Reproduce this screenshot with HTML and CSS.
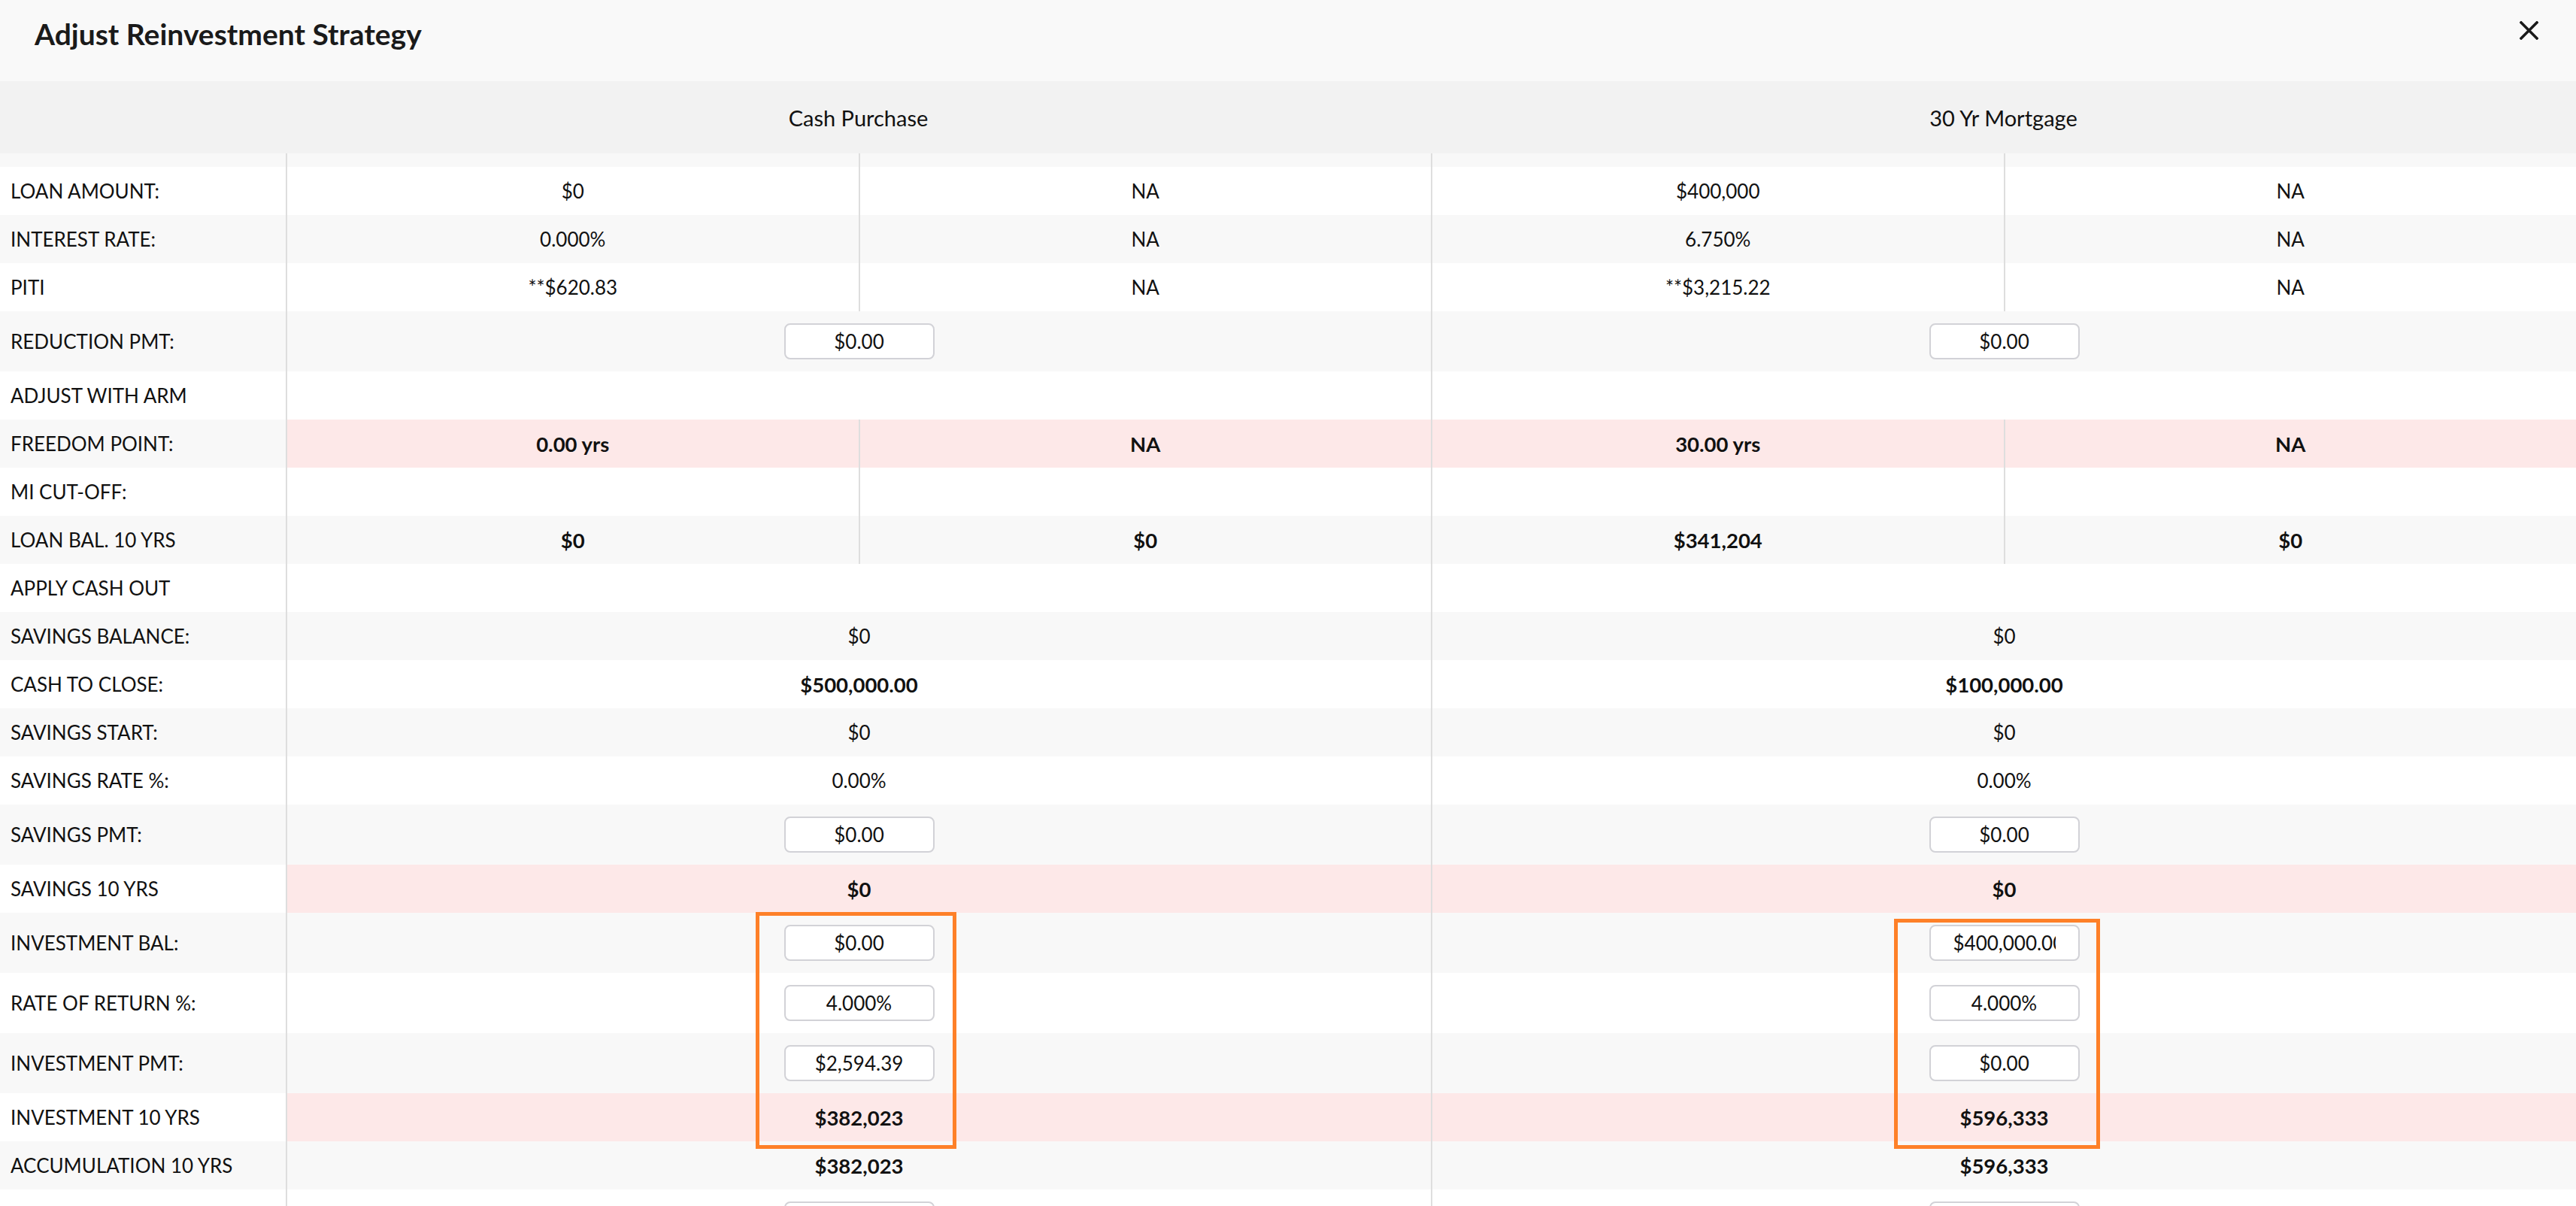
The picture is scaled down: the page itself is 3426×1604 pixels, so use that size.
FILE: index.html
```html
<!DOCTYPE html>
<html lang="en">
<head>
    <meta charset="UTF-8">
    <meta name="viewport" content="width=device-width, initial-scale=1.0">
    <title>Adjust Reinvestment Strategy</title>
    <link rel="stylesheet" href="styles.css">
</head>
<body>
    <div class="modal">
        <header class="modal-header">
            <h2>Adjust Reinvestment Strategy</h2>
            <button class="close-btn" aria-label="Close">
                <svg viewBox="0 0 25 25" width="25" height="25">
                    <path d="M2 2 L23 23 M23 2 L2 23" stroke="#1a1a1a" stroke-width="3.6" stroke-linecap="square" fill="none"/>
                </svg>
            </button>
        </header>

        <div class="col-head">
            <div></div>
            <div>Cash Purchase</div>
            <div>30 Yr Mortgage</div>
        </div>

        <div class="grid">
            <!-- row scrolled under the sticky header -->
            <div class="row stub">
                <div class="label"></div>
                <div class="cell"></div><div class="cell"></div><div class="cell"></div><div class="cell"></div>
            </div>

            <div class="row">
                <div class="label">LOAN AMOUNT:</div>
                <div class="cell">$0</div><div class="cell">NA</div>
                <div class="cell">$400,000</div><div class="cell">NA</div>
            </div>
            <div class="row">
                <div class="label">INTEREST RATE:</div>
                <div class="cell">0.000%</div><div class="cell">NA</div>
                <div class="cell">6.750%</div><div class="cell">NA</div>
            </div>
            <div class="row">
                <div class="label">PITI</div>
                <div class="cell">**$620.83</div><div class="cell">NA</div>
                <div class="cell">**$3,215.22</div><div class="cell">NA</div>
            </div>
            <div class="row tall">
                <div class="label">REDUCTION PMT:</div>
                <div class="cell wide"><label class="field"><input type="text" value="$0.00"></label></div>
                <div class="cell wide"><label class="field"><input type="text" value="$0.00"></label></div>
            </div>
            <div class="row">
                <div class="label">ADJUST WITH ARM</div>
                <div class="cell wide"></div>
                <div class="cell wide"></div>
            </div>
            <div class="row hot">
                <div class="label">FREEDOM POINT:</div>
                <div class="cell strong">0.00 yrs</div><div class="cell strong">NA</div>
                <div class="cell strong">30.00 yrs</div><div class="cell strong">NA</div>
            </div>
            <div class="row">
                <div class="label">MI CUT-OFF:</div>
                <div class="cell"></div><div class="cell"></div>
                <div class="cell"></div><div class="cell"></div>
            </div>
            <div class="row">
                <div class="label">LOAN BAL. 10 YRS</div>
                <div class="cell strong">$0</div><div class="cell strong">$0</div>
                <div class="cell strong">$341,204</div><div class="cell strong">$0</div>
            </div>
            <div class="row">
                <div class="label">APPLY CASH OUT</div>
                <div class="cell wide"></div>
                <div class="cell wide"></div>
            </div>
            <div class="row">
                <div class="label">SAVINGS BALANCE:</div>
                <div class="cell wide">$0</div>
                <div class="cell wide">$0</div>
            </div>
            <div class="row">
                <div class="label">CASH TO CLOSE:</div>
                <div class="cell wide strong">$500,000.00</div>
                <div class="cell wide strong">$100,000.00</div>
            </div>
            <div class="row">
                <div class="label">SAVINGS START:</div>
                <div class="cell wide">$0</div>
                <div class="cell wide">$0</div>
            </div>
            <div class="row">
                <div class="label">SAVINGS RATE %:</div>
                <div class="cell wide">0.00%</div>
                <div class="cell wide">0.00%</div>
            </div>
            <div class="row tall">
                <div class="label">SAVINGS PMT:</div>
                <div class="cell wide"><label class="field"><input type="text" value="$0.00"></label></div>
                <div class="cell wide"><label class="field"><input type="text" value="$0.00"></label></div>
            </div>
            <div class="row hot">
                <div class="label">SAVINGS 10 YRS</div>
                <div class="cell wide strong">$0</div>
                <div class="cell wide strong">$0</div>
            </div>
            <div class="row tall">
                <div class="label">INVESTMENT BAL:</div>
                <div class="cell wide"><label class="field"><input type="text" value="$0.00"></label></div>
                <div class="cell wide"><label class="field"><input type="text" value="$400,000.00"></label></div>
            </div>
            <div class="row tall">
                <div class="label">RATE OF RETURN %:</div>
                <div class="cell wide"><label class="field"><input type="text" value="4.000%"></label></div>
                <div class="cell wide"><label class="field"><input type="text" value="4.000%"></label></div>
            </div>
            <div class="row tall">
                <div class="label">INVESTMENT PMT:</div>
                <div class="cell wide"><label class="field"><input type="text" value="$2,594.39"></label></div>
                <div class="cell wide"><label class="field"><input type="text" value="$0.00"></label></div>
            </div>
            <div class="row hot">
                <div class="label">INVESTMENT 10 YRS</div>
                <div class="cell wide strong">$382,023</div>
                <div class="cell wide strong">$596,333</div>
            </div>
            <div class="row">
                <div class="label">ACCUMULATION 10 YRS</div>
                <div class="cell wide strong">$382,023</div>
                <div class="cell wide strong">$596,333</div>
            </div>
            <div class="row tall">
                <div class="label"></div>
                <div class="cell wide"><label class="field"><input type="text" value="$0.00"></label></div>
                <div class="cell wide"><label class="field"><input type="text" value="$0.00"></label></div>
            </div>
        </div>

        <!-- annotation boxes drawn over the table -->
        <div class="highlight hl-cash"></div>
        <div class="highlight hl-mortgage"></div>
    </div>
</body>
</html>
```

FILE: styles.css
```css
body {
    margin: 0;
    padding: 0;
    font-family: Lato, 'Open Sans', sans-serif;
    color: #111;
    background: #fff;
    height: 100vh;
    overflow: hidden;
}

.modal {
    position: relative;
}

.modal-header {
    display: flex;
    justify-content: space-between;
    align-items: flex-start;
    height: 108px;
    box-sizing: border-box;
    padding: 20px 50px 0 46px;
    background: #f9f9f9;
}

.modal-header h2 {
    margin: 0;
    font-size: 39px;
    line-height: 50px;
    font-weight: 700;
    color: #1a1a1a;
}

.close-btn {
    margin-top: 8px;
    padding: 0;
    width: 25px;
    height: 25px;
    border: none;
    background: none;
    cursor: pointer;
}

.close-btn svg {
    display: block;
}

.col-head {
    display: grid;
    grid-template-columns: 380px 1fr 1fr;
    height: 96px;
    align-items: center;
    background: #f2f2f2;
    font-size: 29px;
    text-align: center;
}

.row {
    display: grid;
    grid-template-columns: 380px repeat(4, 1fr);
    height: 64px;
    font-size: 26px;
}

.row:nth-child(odd) {
    background: #f8f8f8;
}

.row.tall {
    height: 80px;
}

.row.stub {
    height: 18px;
}

.label {
    display: flex;
    align-items: center;
    padding-left: 14px;
    white-space: nowrap;
}

.cell {
    display: flex;
    align-items: center;
    justify-content: center;
    border-left: 2px solid #dedede;
}

.cell.wide {
    grid-column: span 2;
}

.cell.strong {
    font-weight: 700;
    font-size: 27.5px;
}

.row.hot .cell {
    background: #fde8e8;
}

/* input box: the frame carries the padding so long values get clipped */
.field {
    display: flex;
    align-items: center;
    width: 200px;
    height: 48px;
    box-sizing: border-box;
    padding: 0 30px;
    border: 2px solid #d2d2d7;
    border-radius: 8px;
    background: #fff;
}

.field input {
    width: 100%;
    min-width: 0;
    padding: 0;
    border: none;
    background: transparent;
    font-family: Lato, 'Open Sans', sans-serif;
    font-size: 26px;
    color: #111;
    text-align: center;
    outline: none;
}

/* Orange annotation boxes */
.highlight {
    position: absolute;
    border: 5px solid #fe8028;
    box-sizing: border-box;
    pointer-events: none;
}

.hl-cash {
    left: 1005px;
    top: 1213px;
    width: 267px;
    height: 315px;
}

.hl-mortgage {
    left: 2519px;
    top: 1222px;
    width: 274px;
    height: 306px;
}
```
